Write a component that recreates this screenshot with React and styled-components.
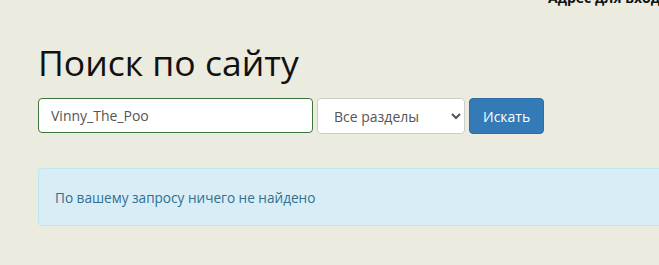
import React from 'react'
import styled, { createGlobalStyle } from 'styled-components'

const GlobalStyle = createGlobalStyle`
  html, body {
    margin: 0;
    padding: 0;
    background: #ecebdf;
    overflow: hidden;
  }
  body {
    font-family: "Open Sans", "Noto Sans", sans-serif;
    font-size: 14px;
    color: #333;
  }
`

const Page = styled.div`
  width: 659px;
  height: 265px;
  overflow: hidden;
`

const TopBar = styled.div`
  display: flow-root;
  height: 0;
  padding-left: 548px;
`

const LoginLabel = styled.div`
  margin-top: -12px;
  font-weight: 700;
  font-size: 14px;
  line-height: 20px;
  color: #111;
  white-space: nowrap;
`

const Container = styled.div`
  padding: 36px 0 0 38px;
  width: 900px;
`

const Title = styled.h1`
  margin: 0 0 10px;
  font-size: 35.5px;
  font-weight: 400;
  line-height: 52px;
  color: #111;
`

const SearchForm = styled.form`
  display: flex;
  align-items: flex-start;
  gap: 4px;
`

const TextInput = styled.input`
  box-sizing: border-box;
  width: 275px;
  height: 35px;
  padding: 6px 12px;
  font: inherit;
  font-size: 14px;
  color: #555;
  background: #fff;
  border: 1px solid #3c763d;
  border-radius: 4px;
  outline: none;
`

const Select = styled.select`
  box-sizing: border-box;
  width: 148px;
  height: 36px;
  padding: 6px 12px;
  font: inherit;
  font-size: 14px;
  color: #555;
  background: #fff;
  border: 1px solid #ccc;
  border-radius: 4px;
`

const Button = styled.button`
  box-sizing: border-box;
  height: 36px;
  padding: 6px 13px;
  font: inherit;
  font-size: 14px;
  color: #fff;
  background: #337ab7;
  border: 1px solid #2e6da4;
  border-radius: 4px;
`

const Alert = styled.div`
  margin-top: 34px;
  box-sizing: border-box;
  height: 58px;
  padding: 0 16px;
  display: flex;
  align-items: center;
  font-size: 13.6px;
  color: #31708f;
  background: #d9edf7;
  border: 1px solid #bce8f1;
  border-radius: 4px;
`

export default function App() {
  return (
    <>
      <GlobalStyle />
      <Page>
        <TopBar>
          <LoginLabel>Адрес для входа</LoginLabel>
        </TopBar>
        <Container>
          <Title>Поиск по сайту</Title>
          <SearchForm onSubmit={e => e.preventDefault()}>
            <TextInput defaultValue="Vinny_The_Poo" />
            <Select defaultValue="all">
              <option value="all">Все разделы</option>
            </Select>
            <Button type="submit">Искать</Button>
          </SearchForm>
          <Alert>По вашему запросу ничего не найдено</Alert>
        </Container>
      </Page>
    </>
  )
}
